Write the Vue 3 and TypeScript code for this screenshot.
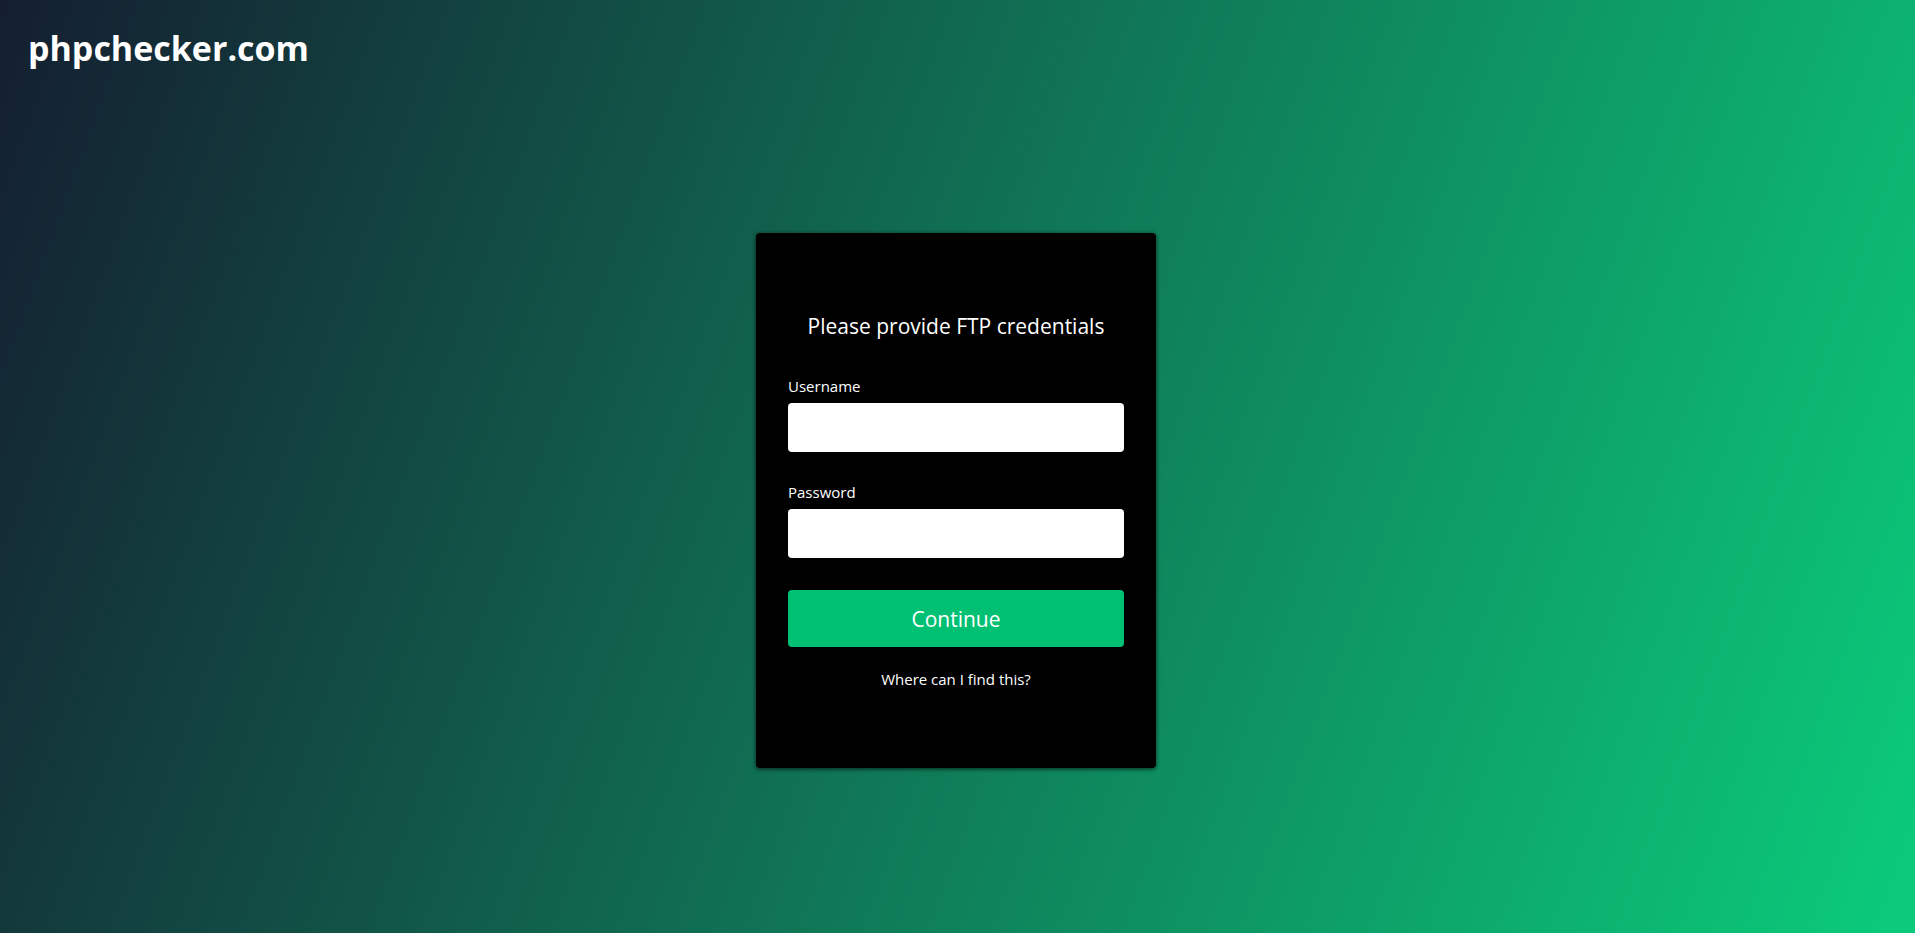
<script setup lang="ts">
import { ref } from 'vue'

const username = ref('')
const password = ref('')
</script>

<template>
  <div class="page">
    <header class="header">
      <h1 class="brand">phpchecker.com</h1>
    </header>
    <main class="main">
      <form class="card" @submit.prevent>
        <h2 class="title">Please provide FTP credentials</h2>
        <div class="field">
          <label for="username">Username</label>
          <input id="username" v-model="username" type="text" autocomplete="username" />
        </div>
        <div class="field">
          <label for="password">Password</label>
          <input id="password" v-model="password" type="password" autocomplete="current-password" />
        </div>
        <button class="submit" type="submit">Continue</button>
        <a class="help" href="#">Where can I find this?</a>
      </form>
    </main>
  </div>
</template>

<style>
body {
  margin: 0;
}
</style>

<style scoped>
.page {
  box-sizing: border-box;
  min-height: 100vh;
  display: flex;
  flex-direction: column;
  background: linear-gradient(110deg, #141e30, #0bcc7b);
  color: #fff;
  font-family: "Open Sans", "Noto Sans", sans-serif;
}

.header {
  height: 68px;
  padding: 0 28px;
}

.brand {
  margin: 0;
  padding-top: 28px;
  font-size: 34px;
  line-height: 40px;
  font-weight: 700;
}

.main {
  flex: 1;
  display: flex;
  align-items: center;
  justify-content: center;
  padding-right: 3px;
}

.card {
  box-sizing: border-box;
  width: 100%;
  max-width: 400px;
  padding: 79px 32px;
  display: flex;
  flex-direction: column;
  border-radius: 4px;
  background: #000;
  box-shadow: 0 1px 4px rgba(0, 0, 0, 0.7);
}

.title {
  margin: 0 0 38px;
  font-size: 21px;
  line-height: 28px;
  font-weight: 400;
  text-align: center;
}

.field {
  display: flex;
  flex-direction: column;
  gap: 9px;
  margin-bottom: 32px;
}

.field label {
  font-size: 15px;
  line-height: 16px;
}

.field input {
  box-sizing: border-box;
  width: 100%;
  height: 49px;
  padding: 0 12px;
  border: 0;
  border-radius: 4px;
  background: #fff;
  color: #000;
  font: inherit;
  font-size: 16px;
}

.submit {
  height: 57px;
  margin: 0 0 22px;
  padding: 0;
  border: 0;
  border-radius: 4px;
  background: #00c073;
  color: #fff;
  font: inherit;
  font-size: 21px;
  cursor: pointer;
}

.help {
  align-self: center;
  color: #fff;
  font-size: 15px;
  line-height: 20px;
  text-decoration: none;
}
</style>
